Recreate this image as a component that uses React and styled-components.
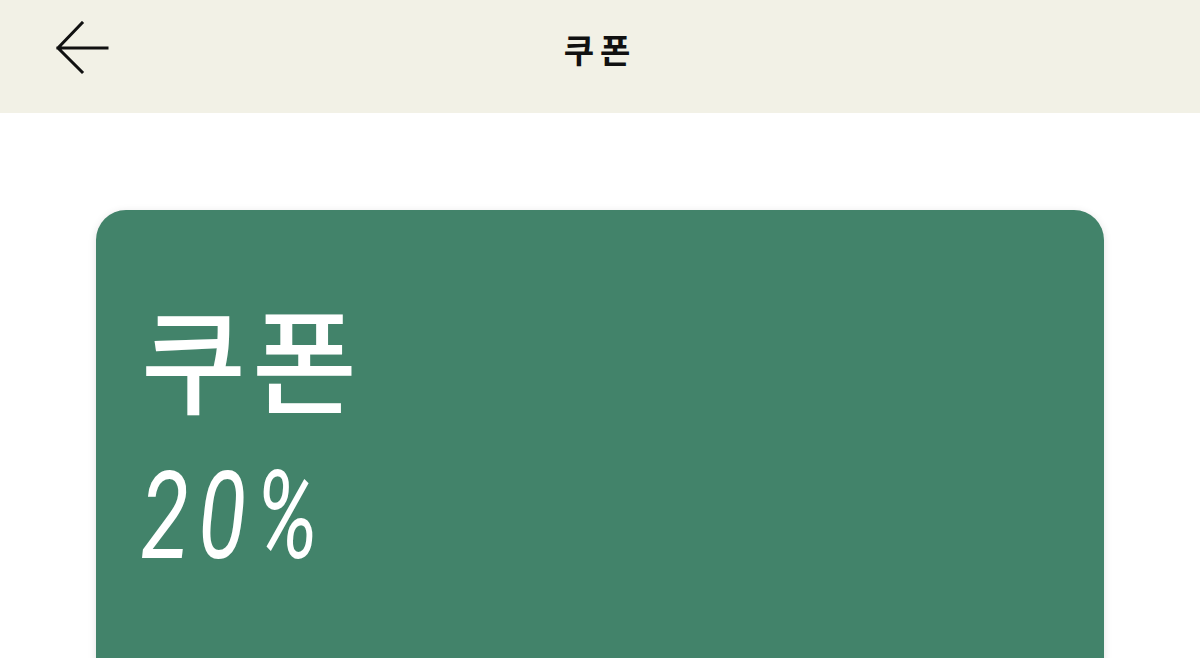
import React from "react";
import styled, { createGlobalStyle } from "styled-components";

const Global = createGlobalStyle`
  html, body { margin: 0; padding: 0; background: #ffffff; }
  body { font-family: "Noto Sans CJK KR", "Noto Sans", sans-serif; overflow: hidden; }
`;

const Page = styled.div`
  width: 1200px;
  height: 658px;
  display: flex;
  flex-direction: column;
  overflow: hidden;
`;

const Header = styled.header`
  height: 113px;
  flex: none;
  background: #f2f1e6;
  display: grid;
  grid-template-columns: 140px 1fr 140px;
  align-items: center;
`;

const BackButton = styled.button`
  border: 0;
  background: none;
  padding: 0;
  margin-left: 55px;
  margin-top: -18px;
  width: 54px;
  height: 54px;
  display: flex;
  align-items: center;
  cursor: pointer;
`;

const Title = styled.h1`
  margin: -16px 0 0 0;
  text-align: center;
  font-size: 33px;
  font-weight: 700;
  letter-spacing: 6px;
  color: #111;
`;

const Main = styled.main`
  flex: 1;
  padding: 97px 96px 0;
`;

const Card = styled.section`
  background: #42836a;
  border-radius: 30px;
  height: 600px;
  box-shadow: 0 2px 8px rgba(0, 0, 0, 0.12);
  padding: 89px 45px 0;
  display: flex;
  flex-direction: column;
  color: #fff;
`;

const CardTitle = styled.div`
  font-family: "Noto Sans CJK KR", sans-serif;
  font-size: 114px;
  font-weight: 500;
  line-height: 1;
  letter-spacing: 6px;
`;

const Percent = styled.div`
  margin-top: 43px;
  font-family: Roboto, "Liberation Sans", sans-serif;
  font-style: italic;
  font-weight: 400;
  font-size: 122px;
  line-height: 1;
  letter-spacing: 13px;
  transform: scaleX(0.72);
  transform-origin: left center;
`;

function BackArrow() {
  return (
    <svg width="54" height="54" viewBox="0 0 54 54" fill="none">
      <path
        d="M52 27H3M27 2L3 27L27 51"
        stroke="#111"
        strokeWidth="3"
        strokeLinecap="square"
      />
    </svg>
  );
}

export default function App() {
  return (
    <Page>
      <Global />
      <Header>
        <BackButton aria-label="back">
          <BackArrow />
        </BackButton>
        <Title>쿠폰</Title>
        <span />
      </Header>
      <Main>
        <Card>
          <CardTitle>쿠폰</CardTitle>
          <Percent>20%</Percent>
        </Card>
      </Main>
    </Page>
  );
}
